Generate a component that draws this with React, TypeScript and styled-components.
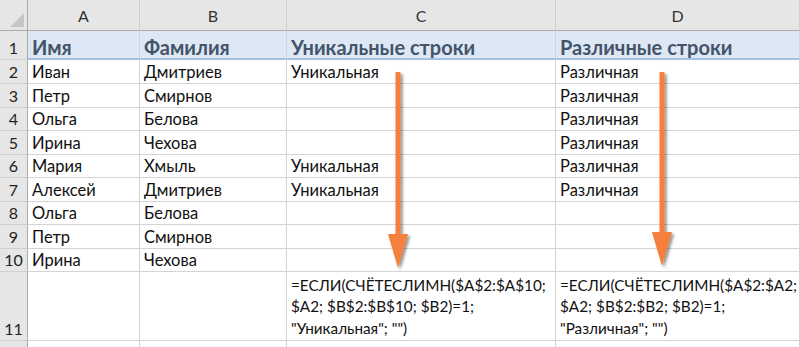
import React from 'react';
import styled, { createGlobalStyle } from 'styled-components';

const GlobalStyle = createGlobalStyle`
  html, body {
    margin: 0;
    padding: 0;
    background: #ffffff;
  }
  body {
    font-family: Lato, "Liberation Sans", sans-serif;
    overflow: hidden;
  }
`;

const gridColor = '#d4d4d4';
const headBg = '#e6e6e6';
const headLine = '#ababab';
const titleColor = '#44546a';
const arrowColor = '#f5803e';

const columns = ['A', 'B', 'C', 'D'];
const rowHeights = [24, 24, 23, 24, 23, 24, 23, 24, 23];

const people = [
  ['Иван', 'Дмитриев', 'Уникальная', 'Различная'],
  ['Петр', 'Смирнов', '', 'Различная'],
  ['Ольга', 'Белова', '', 'Различная'],
  ['Ирина', 'Чехова', '', 'Различная'],
  ['Мария', 'Хмыль', 'Уникальная', 'Различная'],
  ['Алексей', 'Дмитриев', 'Уникальная', 'Различная'],
  ['Ольга', 'Белова', '', ''],
  ['Петр', 'Смирнов', '', ''],
  ['Ирина', 'Чехова', '', ''],
];

const formulaC = ['=ЕСЛИ(СЧЁТЕСЛИМН($A$2:$A$10;', '$A2; $B$2:$B$10; $B2)=1;', '"Уникальная"; "")'];
const formulaD = ['=ЕСЛИ(СЧЁТЕСЛИМН($A$2:$A2;', '$A2; $B$2:$B2; $B2)=1;', '"Различная"; "")'];

const Sheet = styled.div`
  position: relative;
  width: 800px;
  height: 347px;
  overflow: hidden;
`;

const Grid = styled.div`
  display: grid;
  grid-template-columns: 28px 112px 147px 269px 244px;
  grid-template-rows: 31px 29px ${rowHeights.map((h) => h + 'px').join(' ')} 69px 30px;
`;

const Corner = styled.div`
  position: relative;
  background: ${headBg};
  border-right: 1px solid ${headLine};
  border-bottom: 1px solid ${headLine};
  &::after {
    content: '';
    position: absolute;
    right: 3px;
    bottom: 3px;
    width: 0;
    height: 0;
    border-left: 14px solid transparent;
    border-bottom: 14px solid #c6c6c6;
  }
`;

const ColHead = styled.div`
  background: ${headBg};
  border-right: 1px solid #cfcfcf;
  border-bottom: 1px solid ${headLine};
  display: flex;
  align-items: flex-end;
  justify-content: center;
  padding-bottom: 5px;
  font-size: 16px;
  color: #333;
`;

const RowHead = styled.div`
  background: ${headBg};
  border-right: 1px solid ${headLine};
  border-bottom: 1px solid #cfcfcf;
  display: flex;
  align-items: flex-end;
  justify-content: center;
  padding-bottom: 1px;
  font-size: 16px;
  color: #222;
  line-height: 20px;
`;

const Cell = styled.div<{ $title?: boolean }>`
  border-right: 1px solid ${gridColor};
  border-bottom: ${(p) => (p.$title ? '2px solid #a7c0e2' : `1px solid ${gridColor}`)};
  background: ${(p) => (p.$title ? '#dde8f4' : '#ffffff')};
  color: ${(p) => (p.$title ? titleColor : '#111')};
  font-size: ${(p) => (p.$title ? '20px' : '16.5px')};
  font-weight: ${(p) => (p.$title ? 700 : 400)};
  display: flex;
  align-items: flex-end;
  padding: 0 3px 1px 4px;
  white-space: nowrap;
  line-height: 20px;
  overflow: hidden;
`;

const FormulaCell = styled.div`
  border-right: 1px solid ${gridColor};
  border-bottom: 1px solid ${gridColor};
  display: flex;
  flex-direction: column;
  justify-content: flex-end;
  padding: 0 3px 1px 4px;
  font-size: 15.3px;
  line-height: 21.5px;
  color: #111;
  white-space: nowrap;
`;

const Arrow = styled.svg<{ $x: number }>`
  position: absolute;
  left: ${(p) => p.$x - 14}px;
  top: 68px;
  overflow: visible;
`;

function DownArrow({ x, tip }: { x: number; tip: number }) {
  const len = tip - 72;
  return (
    <Arrow $x={x} width={28} height={len + 10} viewBox={`0 0 28 ${len + 10}`}>
      <defs>
        <filter id={`sh${x}`} x="-50%" y="-10%" width="200%" height="130%">
          <feDropShadow dx="2" dy="2" stdDeviation="1.6" floodColor="#000" floodOpacity="0.45" />
        </filter>
      </defs>
      <g filter={`url(#sh${x})`}>
        <rect x={11.5} y={4} width={5} height={len - 30} fill={arrowColor} rx={1} />
        <polygon points={`4,${len - 30} 24,${len - 30} 14,${len + 4}`} fill={arrowColor} />
      </g>
    </Arrow>
  );
}

export default function App() {
  return (
    <Sheet>
      <GlobalStyle />
      <Grid>
        <Corner />
        {columns.map((c) => (
          <ColHead key={c}>{c}</ColHead>
        ))}

        <RowHead>1</RowHead>
        <Cell $title>Имя</Cell>
        <Cell $title>Фамилия</Cell>
        <Cell $title>Уникальные строки</Cell>
        <Cell $title>Различные строки</Cell>

        {people.map((row, i) => (
          <React.Fragment key={i}>
            <RowHead>{i + 2}</RowHead>
            {row.map((v, j) => (
              <Cell key={j}>{v}</Cell>
            ))}
          </React.Fragment>
        ))}

        <RowHead>11</RowHead>
        <Cell />
        <Cell />
        <FormulaCell>
          {formulaC.map((l) => (
            <div key={l}>{l}</div>
          ))}
        </FormulaCell>
        <FormulaCell>
          {formulaD.map((l) => (
            <div key={l}>{l}</div>
          ))}
        </FormulaCell>

        <RowHead />
        <Cell />
        <Cell />
        <Cell />
        <Cell />
      </Grid>
      <DownArrow x={398} tip={268} />
      <DownArrow x={662} tip={266} />
    </Sheet>
  );
}
